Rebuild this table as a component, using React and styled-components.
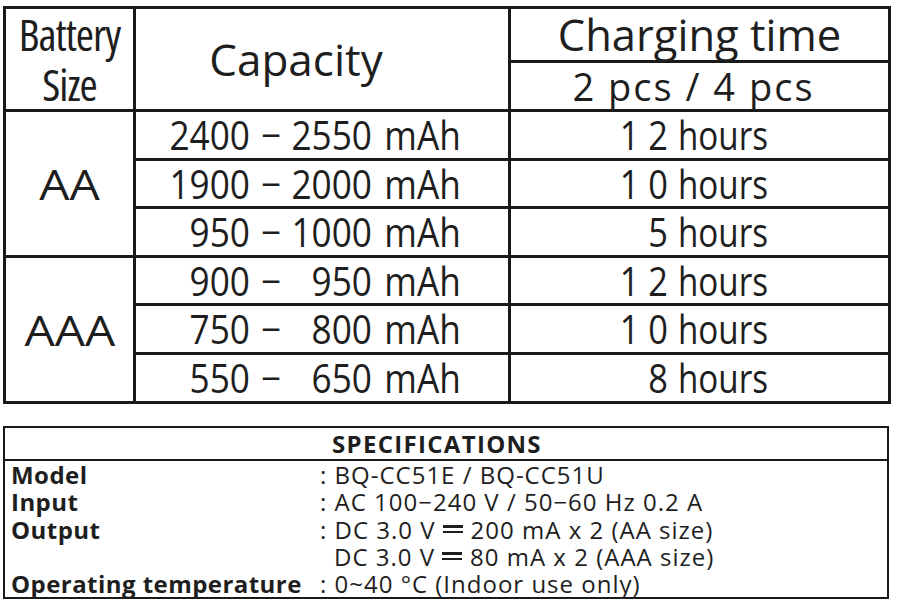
import React from "react";
import styled, { createGlobalStyle } from "styled-components";

const Global = createGlobalStyle`
  html, body {
    margin: 0;
    padding: 0;
    background: #fff;
  }
  body {
    font-family: "Open Sans", "Noto Sans", "DejaVu Sans", sans-serif;
    color: #1e1e1e;
  }
`;

const Page = styled.div`
  width: 884px;
  padding: 6px 0 0 3px;
`;

const Table = styled.table`
  width: 885px;
  border-collapse: collapse;
  table-layout: fixed;
  border: 3px solid #1a1a1a;
`;

const Cell = styled.td`
  border: 3px solid #1a1a1a;
  padding: 0;
  height: ${(p) => p.$h || 45}px;
  vertical-align: middle;
  text-align: ${(p) => p.$align || "center"};
  white-space: nowrap;
`;

const HeadText = styled.div`
  font-size: ${(p) => p.$size || 44}px;
  line-height: 1;
  letter-spacing: ${(p) => p.$track || 0}px;
  padding-right: ${(p) => p.$shift || 0}px;
`;

const SizeLabel = styled.div`
  font-size: 44px;
  line-height: 50px;
  font-stretch: 75%;
  letter-spacing: -1px;
`;

const Group = styled.div`
  display: inline-block;
  font-size: 42px;
  line-height: 1;
  transform: scaleX(1.14);
`;

const DataRow = styled.div`
  display: flex;
  align-items: baseline;
  font-size: 40px;
  line-height: 44px;
`;

const justify = { left: "flex-start", center: "center", right: "flex-end" };

/* narrow face: the source uses a condensed cut, we squeeze the regular one */
const Narrow = styled.span`
  display: inline-flex;
  justify-content: ${(p) => justify[p.$align || "left"]};
  white-space: pre;
  width: ${(p) => (p.$w ? `${p.$w}px` : "auto")};
  padding-left: ${(p) => p.$gap || 0}px;
  transform: scaleX(${(p) => p.$sx || 0.88});
  transform-origin: ${(p) => p.$origin || "left"} center;
`;

const SpecBox = styled.section`
  margin-top: 22px;
  width: 882px;
  border: 2px solid #1a1a1a;
  font-size: 24px;
`;

const SpecHead = styled.div`
  height: 31px;
  line-height: 31px;
  border-bottom: 2px solid #1a1a1a;
  text-align: center;
  font-weight: 700;
  font-size: 24px;
  letter-spacing: 1.3px;
  padding-right: 18px;
`;

const SpecBody = styled.div`
  display: grid;
  grid-template-columns: 309px 1fr;
  padding: 0 0 0 6px;
  line-height: 27.3px;
`;

const Label = styled.div`
  font-weight: 700;
  letter-spacing: 0.45px;
`;

const Value = styled.div`
  letter-spacing: 1px;
  padding-left: ${(p) => (p.$indent ? 14 : 0)}px;
`;

const DcMark = styled.span`
  display: inline-block;
  width: 20px;
  height: 3px;
  border-top: 3px solid #1e1e1e;
  border-bottom: 2px solid #1e1e1e;
  vertical-align: 6px;
  margin: 0 8px 0 7px;
`;

const groups = [
  {
    size: "AA",
    rows: [
      ["2400", "2550", "1 2"],
      ["1900", "2000", "1 0"],
      ["950", "1000", "5"],
    ],
  },
  {
    size: "AAA",
    rows: [
      ["900", "950", "1 2"],
      ["750", "800", "1 0"],
      ["550", "650", "8"],
    ],
  },
];

const rowH = [46, 45, 46, 45, 46, 46];

export default function App() {
  let idx = 0;
  return (
    <Page>
      <Global />
      <Table>
        <colgroup>
          <col style={{ width: 130 }} />
          <col style={{ width: 375 }} />
          <col style={{ width: 380 }} />
        </colgroup>
        <tbody>
          <tr>
            <Cell rowSpan={2} $h={51}>
              <SizeLabel>
                Battery
                <br />
                Size
              </SizeLabel>
            </Cell>
            <Cell rowSpan={2} $h={51}>
              <HeadText $shift={52}>Capacity</HeadText>
            </Cell>
            <Cell $h={51}>
              <HeadText $size={43.5}>Charging time</HeadText>
            </Cell>
          </tr>
          <tr>
            <Cell $h={46}>
              <HeadText $size={38} $track={2} $shift={12}>
                2 pcs / 4 pcs
              </HeadText>
            </Cell>
          </tr>
          {groups.map((g) =>
            g.rows.map((r, i) => {
              const h = rowH[idx++];
              return (
                <tr key={g.size + i}>
                  {i === 0 && (
                    <Cell rowSpan={3} $h={h}>
                      <Group>{g.size}</Group>
                    </Cell>
                  )}
                  <Cell $h={h} $align="left">
                    <DataRow>
                      <Narrow $w={114} $align="right" $origin="right">
                        {r[0]}
                      </Narrow>
                      <Narrow $w={42} $align="center" $origin="center">
                        −
                      </Narrow>
                      <Narrow $w={80} $align="right" $origin="right">
                        {r[1]}
                      </Narrow>
                      <Narrow $gap={14}>mAh</Narrow>
                    </DataRow>
                  </Cell>
                  <Cell $h={h} $align="left">
                    <DataRow>
                      <Narrow $w={157} $align="right" $origin="right" $sx={0.86}>
                        {r[2]}
                      </Narrow>
                      <Narrow $gap={12} $sx={0.83}>
                        hours
                      </Narrow>
                    </DataRow>
                  </Cell>
                </tr>
              );
            })
          )}
        </tbody>
      </Table>

      <SpecBox>
        <SpecHead>SPECIFICATIONS</SpecHead>
        <SpecBody>
          <Label>Model</Label>
          <Value>: BQ-CC51E / BQ-CC51U</Value>
          <Label>Input</Label>
          <Value>: AC 100−240 V / 50−60 Hz 0.2 A</Value>
          <Label>Output</Label>
          <Value>
            : DC 3.0 V<DcMark />200 mA x 2 (AA size)
          </Value>
          <Label />
          <Value $indent>
            DC 3.0 V<DcMark />80 mA x 2 (AAA size)
          </Value>
          <Label>Operating temperature</Label>
          <Value>: 0~40 °C (Indoor use only)</Value>
        </SpecBody>
      </SpecBox>
    </Page>
  );
}
